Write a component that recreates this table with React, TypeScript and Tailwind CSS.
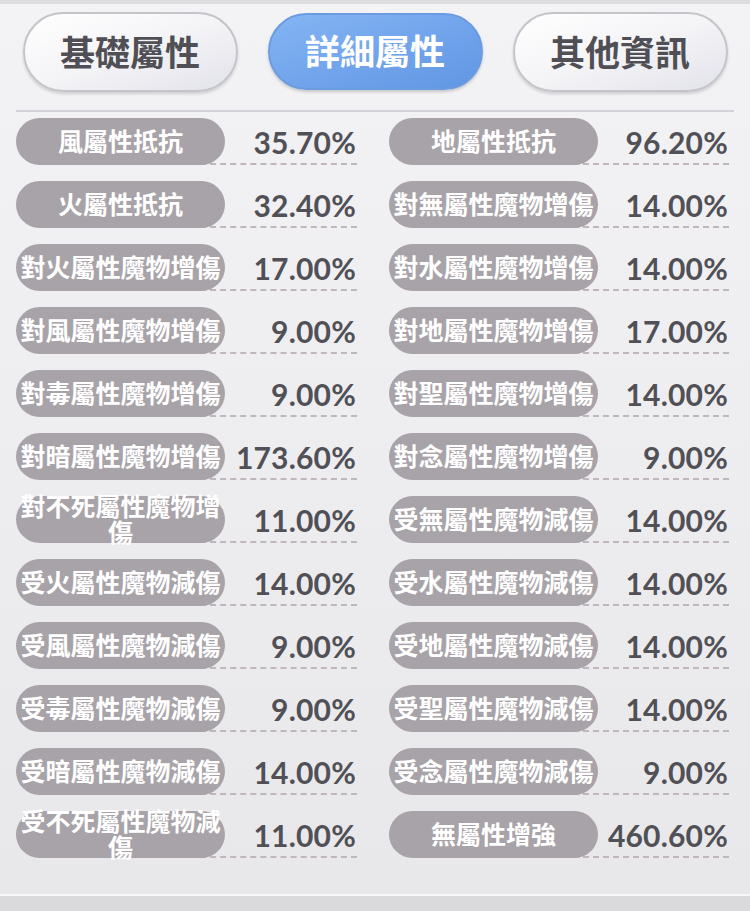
const rows: [string, string, string, string][] = [
  ["風屬性抵抗", "35.70%", "地屬性抵抗", "96.20%"],
  ["火屬性抵抗", "32.40%", "對無屬性魔物增傷", "14.00%"],
  ["對火屬性魔物增傷", "17.00%", "對水屬性魔物增傷", "14.00%"],
  ["對風屬性魔物增傷", "9.00%", "對地屬性魔物增傷", "17.00%"],
  ["對毒屬性魔物增傷", "9.00%", "對聖屬性魔物增傷", "14.00%"],
  ["對暗屬性魔物增傷", "173.60%", "對念屬性魔物增傷", "9.00%"],
  ["對不死屬性魔物增傷", "11.00%", "受無屬性魔物減傷", "14.00%"],
  ["受火屬性魔物減傷", "14.00%", "受水屬性魔物減傷", "14.00%"],
  ["受風屬性魔物減傷", "9.00%", "受地屬性魔物減傷", "14.00%"],
  ["受毒屬性魔物減傷", "9.00%", "受聖屬性魔物減傷", "14.00%"],
  ["受暗屬性魔物減傷", "14.00%", "受念屬性魔物減傷", "9.00%"],
  ["受不死屬性魔物減傷", "11.00%", "無屬性增強", "460.60%"],
];

const cjk = "font-['Noto_Sans_CJK_TC','Noto_Sans_CJK_SC',sans-serif]";

function Tab({ label, active }: { label: string; active?: boolean }) {
  return (
    <div
      className={
        active
          ? `w-[215px] h-[77px] mt-[1px] rounded-full border-2 border-[#6b9be0] bg-gradient-to-br from-[#84b5f3] via-[#72a5ec] to-[#6196e2] shadow-[0_2px_3px_rgba(0,0,0,0.18)] flex items-center justify-center pb-[2px] text-white text-[35px] font-bold ${cjk}`
          : `w-[215px] h-[80px] rounded-full border-2 border-[#c4c4ca] bg-gradient-to-br from-white via-[#f4f4f7] to-[#e2e2ea] shadow-[0_2px_3px_rgba(0,0,0,0.15)] flex items-center justify-center pb-[2px] text-[#4f4f55] text-[35px] font-bold ${cjk}`
      }
    >
      {label}
    </div>
  );
}

function Stat({ label, value }: { label: string; value: string }) {
  return (
    <div className="flex items-stretch h-[47px]">
      <div
        className={`relative z-10 w-[209px] shrink-0 rounded-full bg-[#a8a3a8] flex items-center justify-center text-center text-white text-[25px] leading-[26px] font-bold px-[4px] pb-[4px] ${cjk}`}
      >
        {label}
      </div>
      <div className="-ml-[25px] flex-1 flex items-center justify-end border-b-2 border-dashed border-[#bfb6c0] pr-[1px] pt-[3px] text-[#505056] text-[30px] tracking-[0.2px] font-bold font-['Lato',sans-serif]">
        {value}
      </div>
    </div>
  );
}

export default function App() {
  return (
    <div className="w-[750px] h-[911px] flex flex-col bg-[#dadadc] overflow-hidden">
      <div className="h-[896px] flex flex-col border-t-[4px] border-[#dddde0] bg-gradient-to-b from-[#f3f3f5] to-[#e8e8ea] border-b-2 border-b-[#f6f6f8]">
        <div className="flex justify-center gap-[30px] pt-[8px]">
          <Tab label="基礎屬性" />
          <Tab label="詳細屬性" active />
          <Tab label="其他資訊" />
        </div>
        <div className="mx-[16px] mt-[18px] h-[2px] bg-[#d3d3db]" />
        <div className="grid grid-cols-[341px_340px] gap-x-[32px] gap-y-[16px] pl-[16px] mt-[6px]">
          {rows.flatMap(([l1, v1, l2, v2]) => [
            <Stat key={l1 + "a"} label={l1} value={v1} />,
            <Stat key={l2 + "b"} label={l2} value={v2} />,
          ])}
        </div>
      </div>
    </div>
  );
}
